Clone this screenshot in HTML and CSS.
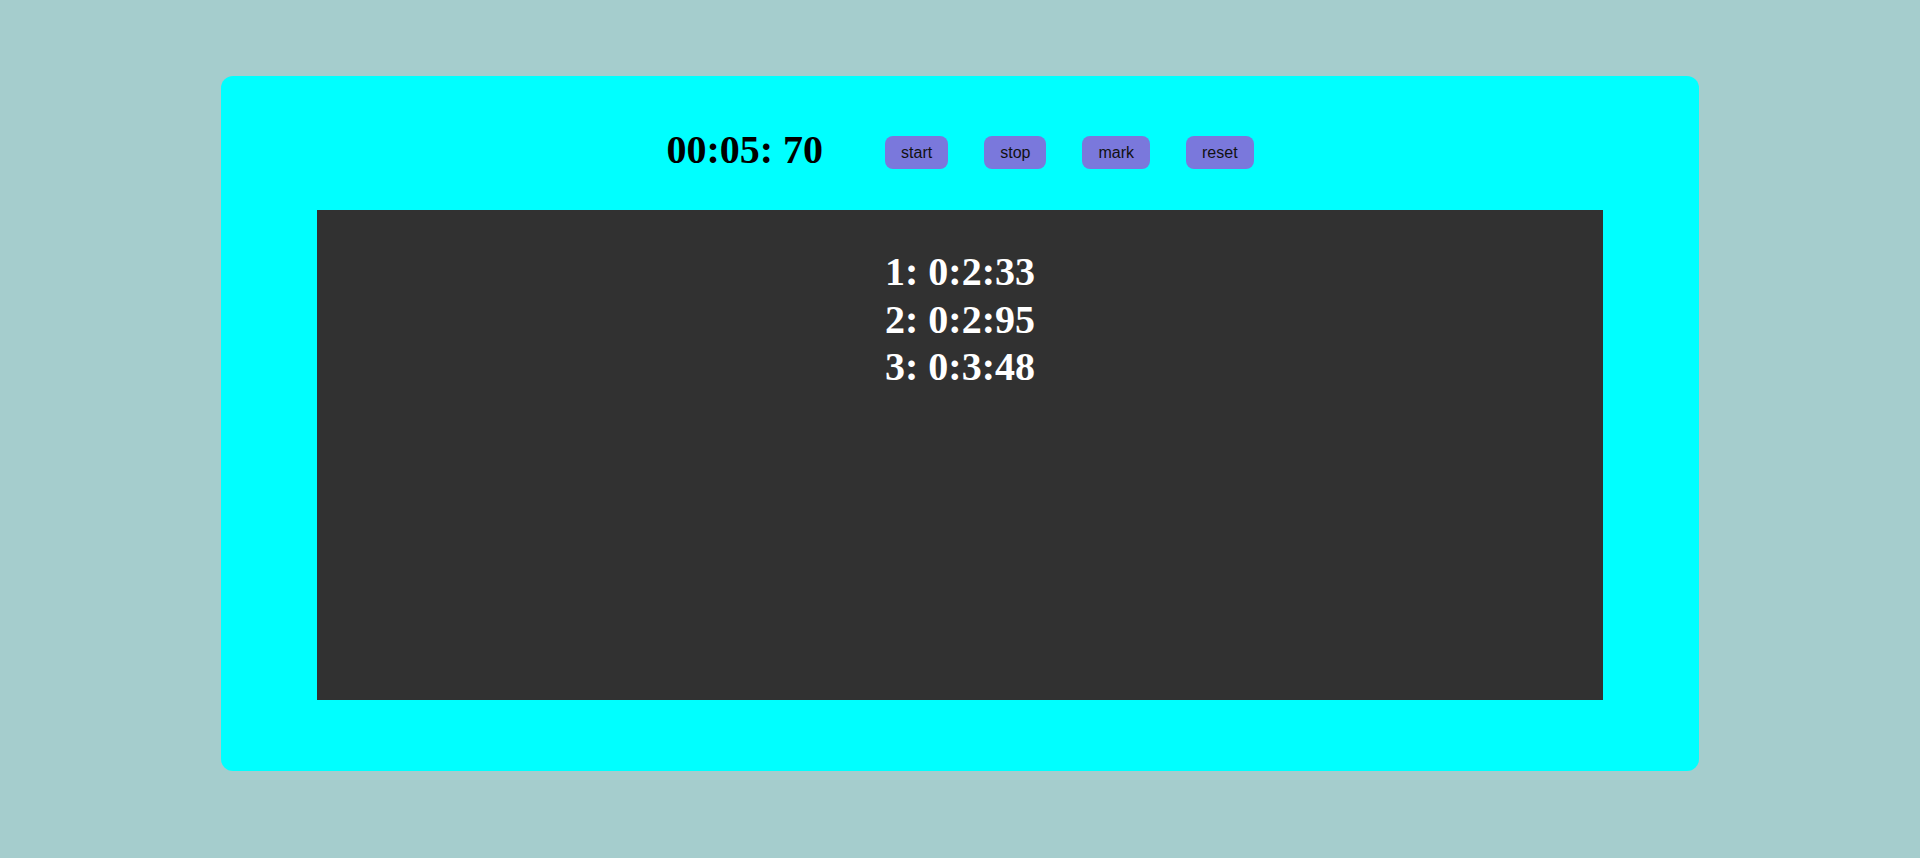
FILE: index.html
```html
<!DOCTYPE html>
<html>
<head>
<meta charset="utf-8">
<link rel="stylesheet" href="styles.css">
</head>
<body>
<div class="page">
  <div class="card">
    <div class="header">
      <div class="timer">00:05: 70</div>
      <div class="buttons">
        <button class="btn">start</button>
        <button class="btn">stop</button>
        <button class="btn">mark</button>
        <button class="btn">reset</button>
      </div>
    </div>
    <div class="laps">
      <div class="lap">1: 0:2:33</div>
      <div class="lap">2: 0:2:95</div>
      <div class="lap">3: 0:3:48</div>
    </div>
  </div>
</div>
</body>
</html>
```
FILE: styles.css
```css
html, body {
  margin: 0;
  padding: 0;
}
body {
  background: #a5cdcd;
  font-family: "Liberation Serif", "Times New Roman", serif;
}
.page {
  padding-top: 76px;
  display: flex;
  justify-content: center;
}
.card {
  width: 1478px;
  height: 695px;
  box-sizing: border-box;
  background: #00ffff;
  border-radius: 12px;
  padding: 51px 96px 0 96px;
}
.header {
  display: flex;
  justify-content: center;
  align-items: flex-start;
  height: 46px;
}
.timer {
  font-size: 40px;
  font-weight: bold;
  line-height: 46px;
  color: #000;
  margin-right: 62px;
}
.buttons {
  display: flex;
  gap: 36px;
  margin-top: 9px;
}
.btn {
  font-family: "Liberation Sans", Arial, sans-serif;
  font-size: 16px;
  color: #111;
  background: #7a78dc;
  border: none;
  border-radius: 8px;
  height: 33px;
  padding: 0 16px;
  margin: 0;
}
.laps {
  margin-top: 37px;
  height: 490px;
  box-sizing: border-box;
  background: #313131;
  padding-top: 38px;
  text-align: center;
  color: #fff;
  font-size: 40px;
  font-weight: bold;
  line-height: 47.5px;
}
```
